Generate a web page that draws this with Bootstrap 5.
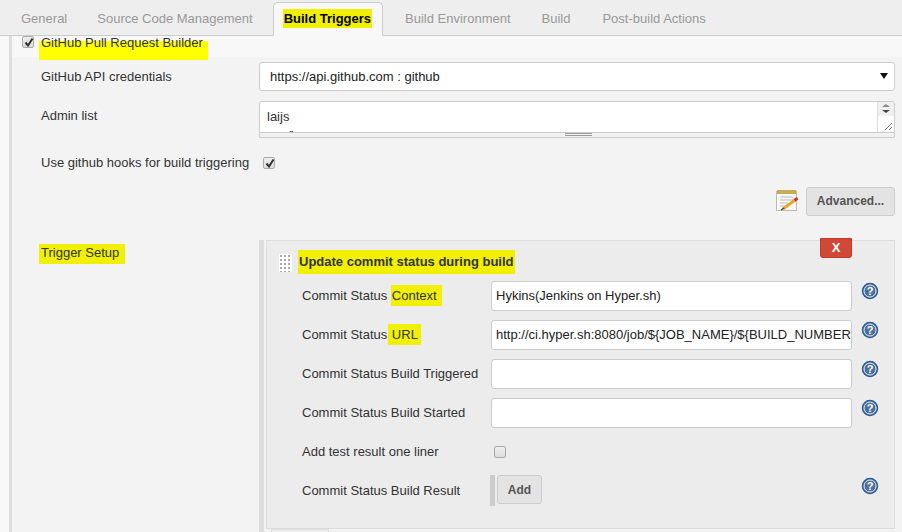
<!DOCTYPE html>
<html lang="en"><head><meta charset="utf-8"><title>Build Triggers</title>
<link rel="stylesheet" href="https://cdn.jsdelivr.net/npm/bootstrap@5.3.0/dist/css/bootstrap.min.css">
<style>
html,body{height:532px;overflow:hidden}
body{font-family:"Liberation Sans",Arial,sans-serif;font-size:13px;color:#333;background:#f8f8f8}
.tabbar{height:36px;background:#eee;border-bottom:1px solid #ccc;padding:2px 0 0 6px;flex-wrap:nowrap}
.tabbar .nav-link{color:#999;font-size:13px;height:34px;padding:6px 14px 0;border:1px solid transparent;border-radius:5px 5px 0 0;margin:0}
.tabbar .nav-link.active{color:#000;font-weight:700;background:#f8f8f8;border-color:#ccc #ccc #f8f8f8;padding:6px 10px 0 9px;margin:0 7px 0 5px}
.tabbar .nav-link.tab-w{padding:6px 15px 0}
.page-wrap{margin-left:9px;border-left:3px solid #ddd;height:496px}
.head-row{height:21px;padding-left:10px;background:#f8f8f8;gap:7px;position:relative;z-index:2;line-height:14px}
.mark-low{background:linear-gradient(transparent 6px,#ff0 6px);padding:0 5px 10px 2px;margin-left:-2px}
.main-area{background:#f3f3f3;padding:5px 7px 0 29px;height:475px}
.mark-y{background:#f0f000;padding:2px 6px 5px 2px;margin-left:-2px;line-height:13px}
.mark-b{background:#f0f000;padding:2px 1px}
.mark-c{background:#f0f000;padding:3px 5px 3px 1px}
.mark-u{background:#f0f000;padding:3px 3px 3px 4px;margin-left:-3px}
.cfg-row{display:grid;grid-template-columns:218px 1fr;align-items:start}
.lbl-top{padding-top:5px}
.fld{border:1px solid #ccc;border-radius:3px;background:#fff;color:#222;height:30px;width:100%;display:block;font-size:13px;padding:0 4px;line-height:28px}
.sel-f{height:29px;padding-left:10px;position:relative;line-height:27px}
.sel-f i{position:absolute;right:6px;top:10px;border-style:solid;border-color:#111 transparent transparent;border-width:6px 4px 0}
.ta-wrap{height:37px;border:1px solid #ccc;border-radius:3px 3px 0 0;background:#fff;position:relative;overflow:hidden;padding:6px 7px 0;line-height:17px}
.ta-side{position:absolute;top:0;right:0;bottom:5px;width:17px;border-left:1px solid #ddd}
.ta-side b{display:block;height:14px;background:#f0f0f0;position:relative}
.ta-side b::before{content:"";position:absolute;left:4px;top:2px;border-style:solid;border-color:transparent transparent #888;border-width:0 4px 3px}
.ta-side b::after{content:"";position:absolute;left:4px;top:8px;border-style:solid;border-color:#444 transparent transparent;border-width:3px 4px 0}
.ta-side svg{position:absolute;right:1px;bottom:1px}
.ta-grip{position:absolute;left:0;right:0;bottom:0;height:5px;background:#f1f1f1;border-top:1px solid #ccc}
.ta-grip::after{content:"";position:absolute;left:305px;width:27px;top:0;height:3px;border-top:1px solid #999;border-bottom:1px solid #999}
.tail-line{padding-left:22px}
.check-c{width:12px;height:12px;border:1px solid #aaa;border-radius:2px;background:linear-gradient(#eee,#ddd);display:inline-block;position:relative;flex:none}
.check-c svg{position:absolute;left:1px;top:0}
.hook-row{height:26px;white-space:nowrap;gap:14px}
.adv-row{height:34px;margin-top:8px;gap:7px}
.jbtn{background:#e3e3e3;border:1px solid #ccc;border-radius:3px;color:#555;font-weight:700;font-size:12px;padding:0}
.adv-b{width:89px;height:29px}
.chunk{border-left:5px solid #ddd}
.inner{border:1px solid #ddd;background:#ececec;margin-left:2px;height:289px;position:relative;padding:10px 0 0 12px}
.del-x{position:absolute;right:42px;top:-3px;width:32px;height:20px;background:#d14836;color:#fff;border:1px solid #c53727;border-radius:0 0 3px 3px;font-weight:700;font-size:13px;line-height:17px;text-align:center}
.dh{gap:6px;height:22px;font-weight:700;color:#333;font-size:13px}
.grip{width:13px;height:18px;background-color:#aaa;background-image:linear-gradient(90deg,transparent 2px,#fff 2px),linear-gradient(transparent 2px,#fff 2px);background-size:4px 4px;background-position:1px 1px;display:block;margin-top:1px}
.frow{display:grid;grid-template-columns:189px 361px 18px;align-items:center;height:39px;padding-left:23px}
.hq{margin-left:9px;margin-top:-9px;display:block}
.rows{margin-top:3px}
.add-bar{margin-left:-1px;border-left:5px solid #ccc;padding-left:2px;height:31px}
.add-b{width:45px;height:29px}
.uncheck{margin-left:3px;display:block}
.stub{width:58px;height:3px;border:1px solid #ddd;background:#eee;border-bottom:0;margin-left:7px}
</style></head><body>
<ul class="nav tabbar d-flex">
<li class="nav-item"><a class="nav-link" href="#">General</a></li>
<li class="nav-item"><a class="nav-link" href="#">Source Code Management</a></li>
<li class="nav-item"><a class="nav-link active" href="#"><span class="mark-b">Build Triggers</span></a></li>
<li class="nav-item"><a class="nav-link" href="#">Build Environment</a></li>
<li class="nav-item"><a class="nav-link tab-w" href="#">Build</a></li>
<li class="nav-item"><a class="nav-link tab-w" href="#">Post-build Actions</a></li>
</ul>
<div class="page-wrap">
<div class="head-row d-flex align-items-start">
<span class="check-c"><svg width="10" height="10" viewBox="0 0 10 10"><path d="M1.5 5.5 4 8.5 8.5 1.5" fill="none" stroke="#333" stroke-width="2"/></svg></span>
<span><span class="mark-low">GitHub Pull Request Builder</span></span>
</div>
<div class="main-area">
<div class="cfg-row" style="height:39px"><span class="lbl-top">GitHub API credentials</span><div class="fld sel-f">https://api.github.com : github<i></i></div></div>
<div class="cfg-row" style="height:49px"><span class="lbl-top">Admin list</span><div class="ta-wrap">laijs<div class="tail-line">r</div><div class="ta-side"><b></b><svg width="9" height="9" viewBox="0 0 9 9"><path d="M1 8 8 1M5 8 8 5" stroke="#777" fill="none"/></svg></div><div class="ta-grip"></div></div></div>
<div class="hook-row d-flex align-items-center">Use github hooks for build triggering<span class="check-c"><svg width="10" height="10" viewBox="0 0 10 10"><path d="M1.5 5.5 4 8.5 8.5 1.5" fill="none" stroke="#333" stroke-width="2"/></svg></span></div>
<div class="adv-row d-flex justify-content-end align-items-center">
<svg width="24" height="24" viewBox="0 0 24 24"><rect x="1.5" y="2.5" width="20" height="19" fill="#f8f8f4" stroke="#bbb"/><rect x="2" y="1" width="19" height="4" fill="#c7ac55"/><path d="M5 8h13M5 11h13M5 14h8M5 17h5" stroke="#b8b8b8"/><path d="M8 20 20 11" stroke="#dfa92f" stroke-width="3"/><path d="M19.5 11.5l3-2.5" stroke="#d8342c" stroke-width="3"/><path d="M6 21l3-2" stroke="#444" stroke-width="1.5"/></svg>
<button class="jbtn adv-b" type="button">Advanced...</button></div>
<div class="cfg-row" style="margin-top:22px"><span><span class="mark-y d-inline-block mt-1">Trigger Setup</span></span>
<div class="chunk"><div class="inner">
<div class="del-x">X</div>
<div class="dh d-flex align-items-center"><span class="grip"></span><span class="mark-b">Update commit status during build</span></div>
<div class="rows">
<div class="frow"><span>Commit Status <span class="mark-c">Context</span></span><div class="fld">Hykins(Jenkins on Hyper.sh)</div><svg class="hq" width="18" height="18" viewBox="0 0 18 18"><use href="#hq"/></svg></div>
<div class="frow"><span>Commit Status <span class="mark-u">URL</span></span><div class="fld overflow-hidden text-nowrap">http://ci.hyper.sh:8080/job/${JOB_NAME}/${BUILD_NUMBER}/</div><svg class="hq" width="18" height="18" viewBox="0 0 18 18"><use href="#hq"/></svg></div>
<div class="frow"><span>Commit Status Build Triggered</span><div class="fld"></div><svg class="hq" width="18" height="18" viewBox="0 0 18 18"><use href="#hq"/></svg></div>
<div class="frow"><span>Commit Status Build Started</span><div class="fld"></div><svg class="hq" width="18" height="18" viewBox="0 0 18 18"><use href="#hq"/></svg></div>
<div class="frow"><span>Add test result one liner</span><div><span class="check-c uncheck"></span></div><span></span></div>
<div class="frow"><span>Commit Status Build Result</span><div class="d-flex add-bar"><button class="jbtn add-b" type="button">Add</button></div><svg class="hq" width="18" height="18" viewBox="0 0 18 18"><use href="#hq"/></svg></div>
</div>
</div><div class="stub"></div></div>
</div>
</div>
</div>
<svg width="0" height="0" class="position-absolute"><defs><g id="hq"><circle cx="9" cy="9" r="7.5" fill="#5a80ad" stroke="#2f5c96" stroke-width="1.5"/><circle cx="9" cy="9" r="6" fill="#4f7199" stroke="#dfe6ef"/><text x="9" y="13" text-anchor="middle" font-family="Liberation Sans" font-weight="700" font-size="11" fill="#fff">?</text></g></defs></svg>
<script src="https://cdn.jsdelivr.net/npm/bootstrap@5.3.0/dist/js/bootstrap.bundle.min.js"></script>
</body></html>
